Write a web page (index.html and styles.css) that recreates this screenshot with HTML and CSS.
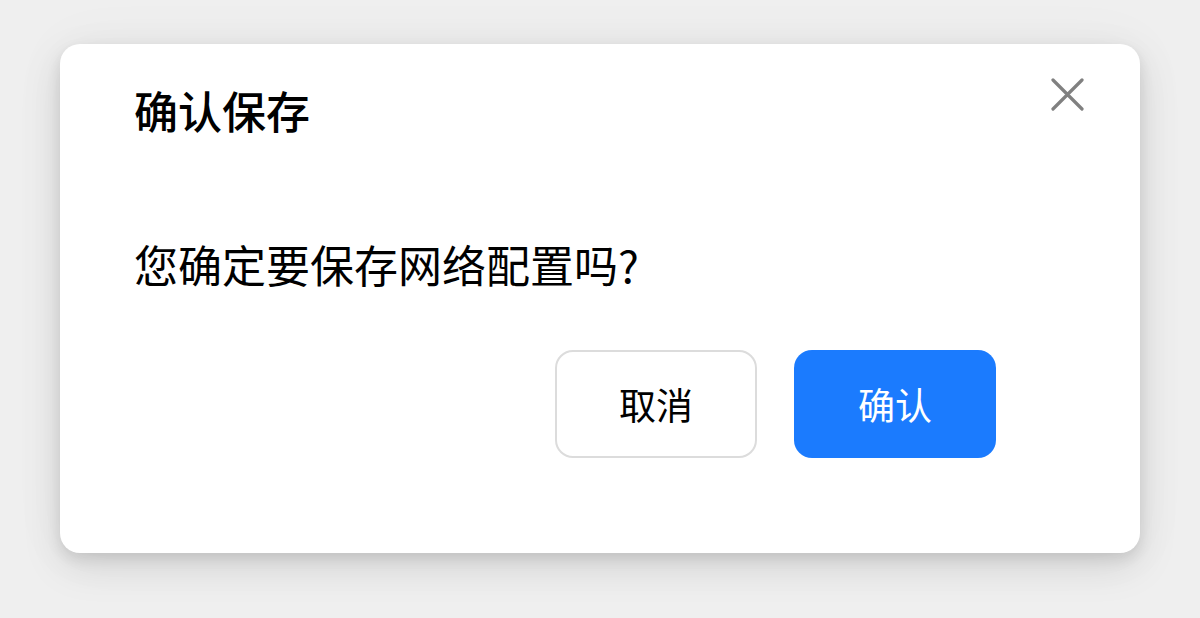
FILE: index.html
```html
<!DOCTYPE html>
<html lang="zh-CN">
<head>
<meta charset="utf-8">
<title>确认保存</title>
<link rel="stylesheet" href="styles.css">
</head>
<body>
<div class="dialog">
  <div class="dialog-header">
    <h1 class="dialog-title">确认保存</h1>
    <button class="close-btn" aria-label="关闭">
      <svg width="33" height="33" viewBox="0 0 33 33"><path d="M2 2L31 31M31 2L2 31" stroke="#808080" stroke-width="3.2" stroke-linecap="round" fill="none"/></svg>
    </button>
  </div>
  <p class="dialog-message">您确定要保存网络配置吗?</p>
  <div class="dialog-actions">
    <button class="btn btn-cancel">取消</button>
    <button class="btn btn-confirm">确认</button>
  </div>
</div>
</body>
</html>
```

FILE: styles.css
```css
html, body {
  margin: 0;
  padding: 0;
}
body {
  width: 1200px;
  height: 618px;
  box-sizing: border-box;
  padding: 44px 60px 0;
  background: #efefef;
  font-family: "Noto Sans CJK SC", "Noto Sans", sans-serif;
  overflow: hidden;
}
.dialog {
  width: 1080px;
  height: 509px;
  box-sizing: border-box;
  background: #fff;
  border-radius: 20px;
  box-shadow: 0 6px 14px rgba(0, 0, 0, 0.1), 0 14px 40px rgba(0, 0, 0, 0.1), 0 0 60px rgba(0, 0, 0, 0.04);
  display: flex;
  flex-direction: column;
  padding-bottom: 95px;
}
.dialog-header {
  display: flex;
  justify-content: space-between;
  align-items: flex-start;
  padding: 34px 56px 0 74px;
}
.dialog-title {
  margin: 4px 0 0;
  font-size: 44px;
  line-height: 56px;
  font-weight: 500;
  color: #000;
}
.close-btn {
  border: none;
  background: none;
  padding: 0;
  width: 33px;
  height: 33px;
  display: flex;
}
.dialog-message {
  margin: 98px 0 0 74px;
  font-size: 44px;
  line-height: 56px;
  color: #000;
}
.dialog-actions {
  margin-top: auto;
  display: flex;
  justify-content: flex-end;
  gap: 37px;
  padding-right: 144px;
}
.btn {
  width: 202px;
  height: 108px;
  box-sizing: border-box;
  border-radius: 18px;
  font-family: "Noto Sans CJK SC", sans-serif;
  font-size: 37px;
  padding: 0;
}
.btn-cancel {
  background: #fff;
  border: 2px solid #dcdcdc;
  color: #000;
}
.btn-confirm {
  background: #1b7bfe;
  border: none;
  color: #fff;
}
```
